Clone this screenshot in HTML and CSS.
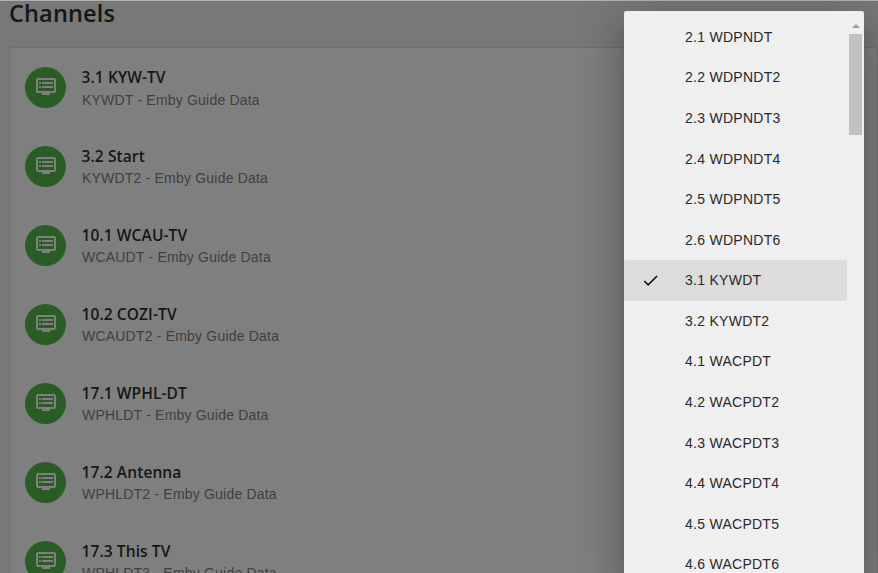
FILE: index.html
```
<!DOCTYPE html>
<html lang="en">
<head>
<meta charset="utf-8">
<title>Channels</title>
<link rel="stylesheet" href="styles.css">
</head>
<body>
<svg class="symbols" aria-hidden="true">
  <symbol id="dvr" viewBox="0 0 20 17"><path fill-rule="evenodd" d="M2 0H18Q20 0 20 2V13Q20 15 18 15H14V17H6V15H2Q0 15 0 13V2Q0 0 2 0ZM2 2V13H18V2Z"/><path d="M3 4H5V6H3ZM6 4H17V6H6ZM3 8H5V10H3ZM6 8H17V10H6Z"/></symbol>
</svg>
<main class="page">
  <h1>Channels</h1>
  <section class="card">
    <div class="row"><span class="badge"><svg><use href="#dvr"/></svg></span><div><h2>3.1 KYW-TV</h2><p>KYWDT - Emby Guide Data</p></div></div>
    <div class="row"><span class="badge"><svg><use href="#dvr"/></svg></span><div><h2>3.2 Start</h2><p>KYWDT2 - Emby Guide Data</p></div></div>
    <div class="row"><span class="badge"><svg><use href="#dvr"/></svg></span><div><h2>10.1 WCAU-TV</h2><p>WCAUDT - Emby Guide Data</p></div></div>
    <div class="row"><span class="badge"><svg><use href="#dvr"/></svg></span><div><h2>10.2 COZI-TV</h2><p>WCAUDT2 - Emby Guide Data</p></div></div>
    <div class="row"><span class="badge"><svg><use href="#dvr"/></svg></span><div><h2>17.1 WPHL-DT</h2><p>WPHLDT - Emby Guide Data</p></div></div>
    <div class="row"><span class="badge"><svg><use href="#dvr"/></svg></span><div><h2>17.2 Antenna</h2><p>WPHLDT2 - Emby Guide Data</p></div></div>
    <div class="row"><span class="badge"><svg><use href="#dvr"/></svg></span><div><h2>17.3 This TV</h2><p>WPHLDT3 - Emby Guide Data</p></div></div>
  </section>
</main>
<div class="menu">
  <ul>
    <li>2.1 WDPNDT</li>
    <li>2.2 WDPNDT2</li>
    <li>2.3 WDPNDT3</li>
    <li>2.4 WDPNDT4</li>
    <li>2.5 WDPNDT5</li>
    <li>2.6 WDPNDT6</li>
    <li class="selected"><svg class="check" viewBox="0 0 24 24"><path d="M9 16.17L4.83 12l-1.42 1.41L9 19 21 7l-1.41-1.41z"/></svg>3.1 KYWDT</li>
    <li>3.2 KYWDT2</li>
    <li>4.1 WACPDT</li>
    <li>4.2 WACPDT2</li>
    <li>4.3 WACPDT3</li>
    <li>4.4 WACPDT4</li>
    <li>4.5 WACPDT5</li>
    <li>4.6 WACPDT6</li>
  </ul>
  <div class="scrollbar"><span class="arrow"></span><span class="thumb"></span></div>
</div>
</body>
</html>
```
FILE: styles.css
```
* { box-sizing: border-box; margin: 0; padding: 0; }
html, body { height: 573px; overflow: hidden; }
body { background: #787878; font-family: "Liberation Sans", Arial, sans-serif; }
.symbols { position: absolute; width: 0; height: 0; }
.page { height: 573px; border-top: 1px solid #b0b0b0; padding-left: 9px; overflow: hidden; }
h1 { height: 46px; font: 600 23.5px/24px "Open Sans", "Noto Sans", sans-serif; letter-spacing: .15px; color: #161616; }
.card { height: 526px; border: 1px solid #6f6f6f; border-bottom: 0; border-radius: 3px 3px 0 0; background: #7f7f7f; overflow: hidden; }
.row { display: flex; align-items: center; gap: 16px; height: 79px; padding-left: 15px; }
.badge { display: flex; align-items: center; justify-content: center; width: 41px; height: 41px; margin-bottom: 1px; border-radius: 50%; background: #295d25; }
.badge svg { width: 20px; height: 17px; margin-bottom: 1px; fill: #7f7f7f; }
h2 { margin-left: -.5px; font: 600 15.5px/22px "Open Sans", "Noto Sans", sans-serif; font-kerning: none; letter-spacing: .1px; color: #161616; white-space: nowrap; }
.row p { font-size: 14px; line-height: 22px; letter-spacing: .2px; color: #404040; }
.row:first-child p { padding-top: 1px; margin-bottom: -1px; }
.menu { position: absolute; left: 624px; top: 11px; display: flex; width: 240px; height: 562px; border-radius: 2px 2px 0 0; background: #efefef; box-shadow: 0 9px 46px 8px rgba(0,0,0,.14), 0 11px 15px -7px rgba(0,0,0,.2), 0 24px 38px 3px rgba(0,0,0,.14); overflow: hidden; }
ul { width: 223px; padding-top: 6px; list-style: none; }
li { display: flex; align-items: center; height: 40.57px; padding: 0 0 .8px 61px; font-size: 14px; letter-spacing: .27px; color: #2a2a2a; border-radius: 2px; }
.selected { padding-left: 17px; background: #dcdcdc; }
.check { width: 19px; height: 19px; margin-right: 25px; fill: #111; }
.scrollbar { display: flex; flex-direction: column; align-items: center; width: 17px; padding: 13px 2px 0 2px; }
.arrow { border: 4px solid transparent; border-top: 0; border-bottom-color: #a0a0a0; }
.thumb { width: 13px; height: 101px; margin-top: 6px; background: #c1c1c1; }
```
